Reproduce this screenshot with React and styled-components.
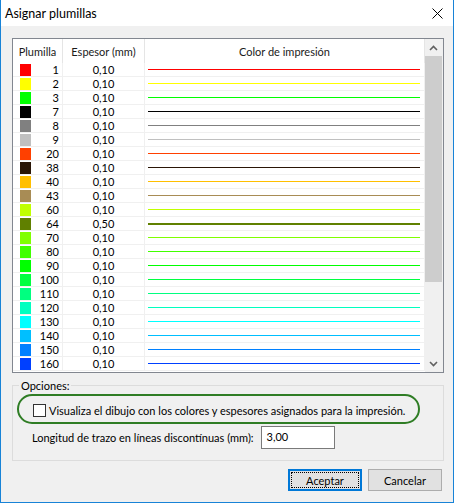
import React from "react";
import styled, { createGlobalStyle } from "styled-components";

const FONT = `Lato, "Liberation Sans", Arial, sans-serif`;

const GlobalStyle = createGlobalStyle`
  html, body { margin: 0; padding: 0; background: #ffffff; }
  body { font-family: ${FONT}; font-size: 11px; color: #000; }
  * { box-sizing: border-box; }
`;

const Window = styled.div`
  width: 454px;
  height: 503px;
  border: 1px solid #1883d7;
  border-top: none;
  display: flex;
  flex-direction: column;
  font-family: ${FONT};
  font-size: 11px;
  overflow: hidden;
`;

const TitleBar = styled.div`
  height: 26px;
  flex: none;
  background: #ffffff;
  display: flex;
  align-items: center;
  justify-content: space-between;
  padding: 0 10px 0 4px;
`;

const Title = styled.span`
  font-size: 12.5px;
  color: #000;
`;

const Client = styled.div`
  flex: 1;
  background: #f0f0f0;
  display: flex;
  flex-direction: column;
  padding: 12px 9px 0 11px;
`;

const ListBox = styled.div`
  height: 335px;
  width: 432px;
  flex: none;
  border: 1px solid #828790;
  background: #ffffff;
  display: flex;
  overflow: hidden;
`;

const Table = styled.div`
  width: 412px;
  display: flex;
  flex-direction: column;
`;

const COLS = "50px 82px 280px";

const HeaderRow = styled.div`
  display: grid;
  grid-template-columns: ${COLS};
  height: 24px;
  flex: none;
`;

const HeaderCell = styled.div`
  display: flex;
  align-items: center;
  justify-content: center;
  border-right: 1px solid #e5e5e5;
  color: #1a1a1a;
  padding-top: 1px;
`;

const Row = styled.div`
  display: grid;
  grid-template-columns: ${COLS};
  height: 14px;
  flex: none;
`;

const Cell = styled.div`
  border-right: 1px solid #f0f0f0;
  border-bottom: 1px solid #f0f0f0;
  display: flex;
  align-items: center;
  justify-content: ${(p) => p.$justify || "flex-start"};
  padding: ${(p) => p.$pad || "0"};
  line-height: 13px;
  overflow: hidden;
`;

const Swatch = styled.span`
  width: 11px;
  height: 12px;
  background: ${(p) => p.$color};
  flex: none;
`;

const PenNumber = styled.span`
  flex: 1;
  text-align: right;
`;

const ColorLine = styled.div`
  flex: 1;
  height: 0;
  border-top: ${(p) => p.$thick}px solid ${(p) => p.$color};
  margin-top: ${(p) => (p.$thick > 1 ? 1 : 0)}px;
`;

const ScrollBar = styled.div`
  width: 18px;
  background: #f0f0f0;
  display: flex;
  flex-direction: column;
  padding-right: 1px;
`;

const ArrowButton = styled.div`
  height: 17px;
  flex: none;
  display: flex;
  align-items: center;
  justify-content: center;
`;

const Track = styled.div`
  flex: 1;
  display: flex;
  flex-direction: column;
`;

const Thumb = styled.div`
  height: 226px;
  background: #cdcdcd;
`;

const Group = styled.fieldset`
  margin: 5px 0 0 0;
  padding: 0 0 11px 0;
  width: 432px;
  height: 83px;
  border: 1px solid #dcdcdc;
  min-width: 0;
`;

const Legend = styled.legend`
  margin-left: 6px;
  padding: 0 2px;
  line-height: 15px;
  color: #000;
`;

const Highlight = styled.div`
  margin: 1px 0 0 4px;
  width: 403px;
  height: 30px;
  border: 2px solid #2f7d25;
  border-radius: 15px;
  display: flex;
  align-items: center;
  padding: 3px 0 0 14px;
`;

const CheckBox = styled.span`
  width: 13px;
  height: 13px;
  border: 1px solid #333333;
  background: #ffffff;
  flex: none;
`;

const CheckLabel = styled.span`
  margin-left: 3px;
  white-space: nowrap;
`;

const FieldRow = styled.div`
  display: flex;
  align-items: center;
  margin: 2px 0 0 19px;
  gap: 7px;
`;

const FieldLabel = styled.span`
  white-space: nowrap;
`;

const TextInput = styled.div`
  width: 74px;
  height: 23px;
  border: 1px solid #7a7a7a;
  background: #ffffff;
  padding: 3px 0 0 5px;
  line-height: 14px;
`;

const ButtonRow = styled.div`
  display: flex;
  justify-content: flex-end;
  gap: 6px;
  margin-top: 8px;
  padding-right: 2px;
`;

const Button = styled.div`
  width: 74px;
  height: 22px;
  background: #e1e1e1;
  border: ${(p) => (p.$default ? "1px solid #0078d7" : "1px solid #adadad")};
  box-shadow: ${(p) => (p.$default ? "inset 0 0 0 1px #0078d7" : "none")};
  display: flex;
  align-items: center;
  justify-content: center;
  padding: 2px;
`;

const FocusRect = styled.div`
  flex: 1;
  align-self: stretch;
  display: flex;
  align-items: center;
  justify-content: center;
  border: ${(p) => (p.$show ? "1px dotted #000" : "1px solid transparent")};
`;

const pens = [
  [1, "#ff0000", "0,10"],
  [2, "#ffff00", "0,10"],
  [3, "#00ff00", "0,10"],
  [7, "#000000", "0,10"],
  [8, "#808080", "0,10"],
  [9, "#c0c0c0", "0,10"],
  [20, "#ff4000", "0,10"],
  [38, "#2a1606", "0,10"],
  [40, "#ffbf00", "0,10"],
  [43, "#a88c55", "0,10"],
  [60, "#c0ff00", "0,10"],
  [64, "#608000", "0,50"],
  [70, "#80ff00", "0,10"],
  [80, "#40ff00", "0,10"],
  [90, "#00ff00", "0,10"],
  [100, "#00ff40", "0,10"],
  [110, "#00ff80", "0,10"],
  [120, "#00ffc0", "0,10"],
  [130, "#00ffff", "0,10"],
  [140, "#00bfff", "0,10"],
  [150, "#0080ff", "0,10"],
  [160, "#0040ff", "0,10"],
];

const Chevron = ({ up }) => (
  <svg width="9" height="6" viewBox="0 0 9 6">
    <path
      d={up ? "M1 5 L4.5 1.5 L8 5" : "M1 1 L4.5 4.5 L8 1"}
      fill="none"
      stroke="#606060"
      strokeWidth="1.6"
    />
  </svg>
);

const CloseIcon = () => (
  <svg width="11" height="11" viewBox="0 0 11 11">
    <path d="M0.5 0.5 L10.5 10.5 M10.5 0.5 L0.5 10.5" stroke="#000" strokeWidth="1" />
  </svg>
);

export default function App() {
  return (
    <>
      <GlobalStyle />
      <Window>
        <TitleBar>
          <Title>Asignar plumillas</Title>
          <CloseIcon />
        </TitleBar>
        <Client>
          <ListBox>
            <Table>
              <HeaderRow>
                <HeaderCell>Plumilla</HeaderCell>
                <HeaderCell>Espesor (mm)</HeaderCell>
                <HeaderCell>Color de impresión</HeaderCell>
              </HeaderRow>
              {pens.map(([n, c, w]) => (
                <Row key={n}>
                  <Cell $pad="0 3px 0 7px">
                    <Swatch $color={c} />
                    <PenNumber>{n}</PenNumber>
                  </Cell>
                  <Cell $justify="center">{w}</Cell>
                  <Cell $pad="0 4px 0 3px">
                    <ColorLine $color={c} $thick={w === "0,50" ? 2 : 1} />
                  </Cell>
                </Row>
              ))}
            </Table>
            <ScrollBar>
              <ArrowButton>
                <Chevron up />
              </ArrowButton>
              <Track>
                <Thumb />
              </Track>
              <ArrowButton>
                <Chevron />
              </ArrowButton>
            </ScrollBar>
          </ListBox>
          <Group>
            <Legend>Opciones:</Legend>
            <Highlight>
              <CheckBox />
              <CheckLabel>
                Visualiza el dibujo con los colores y espesores asignados para la impresión.
              </CheckLabel>
            </Highlight>
            <FieldRow>
              <FieldLabel>Longitud de trazo en líneas discontínuas (mm):</FieldLabel>
              <TextInput>3,00</TextInput>
            </FieldRow>
          </Group>
          <ButtonRow>
            <Button $default>
              <FocusRect $show>Aceptar</FocusRect>
            </Button>
            <Button>
              <FocusRect>Cancelar</FocusRect>
            </Button>
          </ButtonRow>
        </Client>
      </Window>
    </>
  );
}
